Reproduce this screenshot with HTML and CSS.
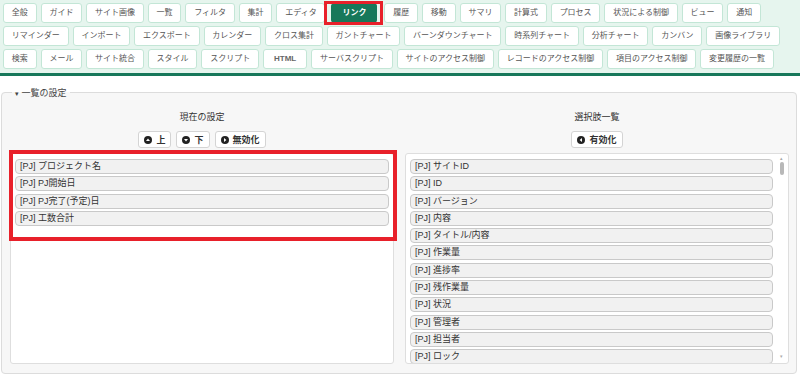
FILE: index.html
```html
<!DOCTYPE html>
<html lang="ja">
<head>
  <meta charset="UTF-8" />
  <meta name="viewport" content="width=device-width, initial-scale=1" />
  <title>一覧の設定</title>
  <link rel="stylesheet" href="styles.css">
</head>
<body>

  <div class="menu">
    <div class="menu-row">
      <button class="tab">全般</button>
      <button class="tab">ガイド</button>
      <button class="tab">サイト画像</button>
      <button class="tab">一覧</button>
      <button class="tab">フィルタ</button>
      <button class="tab">集計</button>
      <button class="tab">エディタ</button>
      <button class="tab active">リンク</button>
      <button class="tab">履歴</button>
      <button class="tab">移動</button>
      <button class="tab">サマリ</button>
      <button class="tab">計算式</button>
      <button class="tab">プロセス</button>
      <button class="tab">状況による制御</button>
      <button class="tab">ビュー</button>
      <button class="tab">通知</button>
    </div>
    <div class="menu-row">
      <button class="tab">リマインダー</button>
      <button class="tab">インポート</button>
      <button class="tab">エクスポート</button>
      <button class="tab">カレンダー</button>
      <button class="tab">クロス集計</button>
      <button class="tab">ガントチャート</button>
      <button class="tab">バーンダウンチャート</button>
      <button class="tab">時系列チャート</button>
      <button class="tab">分析チャート</button>
      <button class="tab">カンバン</button>
      <button class="tab">画像ライブラリ</button>
    </div>
    <div class="menu-row">
      <button class="tab">検索</button>
      <button class="tab">メール</button>
      <button class="tab">サイト統合</button>
      <button class="tab">スタイル</button>
      <button class="tab">スクリプト</button>
      <button class="tab latin">HTML</button>
      <button class="tab">サーバスクリプト</button>
      <button class="tab">サイトのアクセス制御</button>
      <button class="tab">レコードのアクセス制御</button>
      <button class="tab">項目のアクセス制御</button>
      <button class="tab">変更履歴の一覧</button>
    </div>
  </div>

  <fieldset class="settings">
    <legend><span class="caret">&#9662;</span> 一覧の設定</legend>

    <div class="columns">
      <div class="column">
        <div class="column-title">現在の設定</div>
        <div class="commands">
          <button class="cmd">
            <svg class="icon" viewBox="0 0 8 8"><circle cx="4" cy="4" r="4"/><path d="M2 5 L4 2.6 L6 5 Z" fill="#fff"/></svg>上
          </button>
          <button class="cmd">
            <svg class="icon" viewBox="0 0 8 8"><circle cx="4" cy="4" r="4"/><path d="M2 3 L4 5.4 L6 3 Z" fill="#fff"/></svg>下
          </button>
          <button class="cmd">
            <svg class="icon" viewBox="0 0 8 8"><circle cx="4" cy="4" r="4"/><path d="M3 2 L5.4 4 L3 6 Z" fill="#fff"/></svg>無効化
          </button>
        </div>
        <div class="list marked">
          <div class="items">
            <div class="item">[PJ] プロジェクト名</div>
            <div class="item">[PJ] PJ開始日</div>
            <div class="item">[PJ] PJ完了(予定)日</div>
            <div class="item">[PJ] 工数合計</div>
          </div>
        </div>
      </div>

      <div class="column">
        <div class="column-title">選択肢一覧</div>
        <div class="commands">
          <button class="cmd">
            <svg class="icon" viewBox="0 0 8 8"><circle cx="4" cy="4" r="4"/><path d="M5 2 L2.6 4 L5 6 Z" fill="#fff"/></svg>有効化
          </button>
        </div>
        <div class="list">
          <div class="items">
            <div class="item">[PJ] サイトID</div>
            <div class="item">[PJ] ID</div>
            <div class="item">[PJ] バージョン</div>
            <div class="item">[PJ] 内容</div>
            <div class="item">[PJ] タイトル/内容</div>
            <div class="item">[PJ] 作業量</div>
            <div class="item">[PJ] 進捗率</div>
            <div class="item">[PJ] 残作業量</div>
            <div class="item">[PJ] 状況</div>
            <div class="item">[PJ] 管理者</div>
            <div class="item">[PJ] 担当者</div>
            <div class="item">[PJ] ロック</div>
          </div>
          <div class="scrollbar">
            <span class="arrow">&#9652;</span>
            <span class="thumb"></span>
            <span class="track"></span>
            <span class="arrow">&#9662;</span>
          </div>
        </div>
      </div>
    </div>
  </fieldset>

</body>
</html>
```

FILE: styles.css
```css
* {
  box-sizing: border-box;
}

body {
  margin: 0;
  background: #fff;
  font-family: 'Liberation Sans', 'Noto Sans CJK JP', sans-serif;
  font-size: 9px;
  color: #333;
}

button {
  font-family: inherit;
}

/* tab strip */
.menu {
  background: #e6f5ee;
  padding: 3px 3px 4px;
  border-bottom: 3px solid #17785a;
}

.menu-row {
  display: flex;
  gap: 4px;
  margin-bottom: 3px;
}

.menu-row:last-child {
  margin-bottom: 0;
}

.tab {
  position: relative;
  height: 20px;
  padding: 0 7.8px;
  border: 1px solid #c3e6d6;
  border-radius: 3px;
  background: #fff;
  color: #555;
  font-size: 8px;
  line-height: 18px;
  white-space: nowrap;
}

.tab.latin {
  font-weight: bold;
  color: #666;
  padding: 0 10px;
}

.tab.active {
  margin: 0 3px 0 2px;
  background: #17785a;
  border-color: #17785a;
  color: #fff;
  font-weight: bold;
  padding: 0 10px;
}

.tab.active::after {
  content: "";
  position: absolute;
  top: -3px;
  bottom: -3px;
  left: -8px;
  right: -7px;
  border: 3px solid #e8202a;
}

/* settings */
.settings {
  margin: 10px 3px 0 1px;
  padding: 12px 7px 9px 8px;
  border: 1px solid #dcdcdc;
  border-radius: 4px;
  background: #f7f7f7;
}

.settings legend {
  margin-left: 2px;
  padding: 0 3px;
  font-size: 9px;
  color: #444;
}

.caret {
  font-size: 7px;
}

.columns {
  display: grid;
  grid-template-columns: 1fr 1fr;
  gap: 11px;
}

.column-title {
  text-align: center;
  line-height: 12px;
  margin-bottom: 8px;
}

.commands {
  display: flex;
  justify-content: center;
  gap: 5px;
  margin-bottom: 5px;
}

.cmd {
  display: flex;
  align-items: center;
  gap: 4px;
  height: 17px;
  padding: 0 5px;
  border: 1px solid #d4d4d4;
  border-radius: 3px;
  background: #fff;
  color: #333;
  font-size: 9px;
  font-weight: bold;
}

.icon {
  width: 8px;
  height: 8px;
  fill: #222;
}

.list {
  position: relative;
  display: flex;
  height: 211px;
  overflow: hidden;
  border: 1px solid #dedede;
  border-radius: 3px;
  background: #fff;
  padding: 5px 2px 0 4px;
}

.list.marked {
  overflow: visible;
}

.list.marked::after {
  content: "";
  position: absolute;
  top: -4px;
  left: -2px;
  right: -4px;
  height: 83px;
  border: 4px solid #e8202a;
}

.list.marked .items {
  padding-right: 2px;
}

.items {
  flex: 1;
}

.item {
  height: 15px;
  margin-bottom: 2.3px;
  padding-left: 4px;
  border: 1px solid #c9c9c9;
  border-radius: 4px;
  background: #f1f1f1;
  line-height: 13px;
  color: #333;
  white-space: nowrap;
}

.scrollbar {
  display: flex;
  flex-direction: column;
  align-items: center;
  width: 9px;
  margin-left: 4px;
  margin-top: -4px;
  padding-bottom: 4px;
}

.arrow {
  font-size: 5px;
  line-height: 6px;
  color: #aaa;
}

.thumb {
  width: 4px;
  height: 13px;
  margin-top: 1px;
  border-radius: 2px;
  background: #b8b8b8;
}

.track {
  flex: 1;
}
```
